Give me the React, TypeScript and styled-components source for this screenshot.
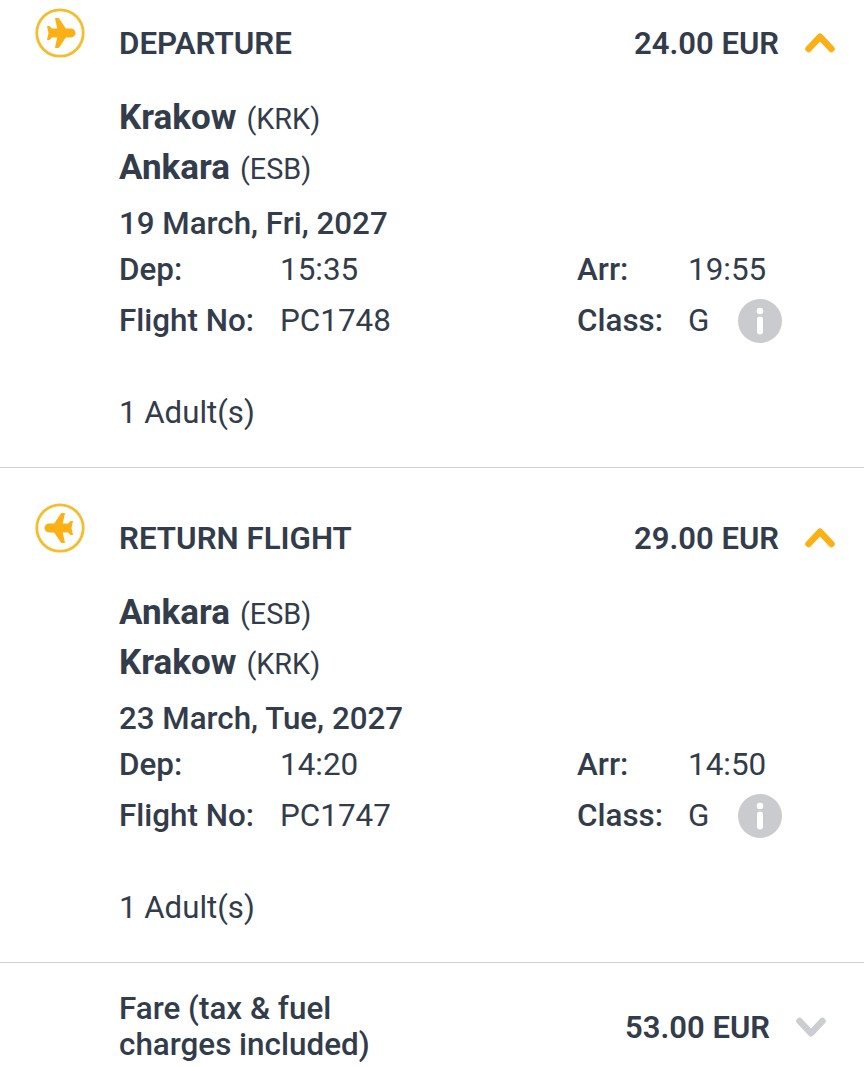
import React from "react";
import styled, { createGlobalStyle } from "styled-components";

const GlobalStyle = createGlobalStyle`
  html, body {
    margin: 0;
    padding: 0;
    background: #ffffff;
  }
  body {
    font-family: Roboto, "Liberation Sans", sans-serif;
    color: #333c4a;
  }
`;

// styles
const Page = styled.div`
  width: 864px;
  height: 1067px;
  overflow: hidden;
  background-color: #ffffff;
`;

const FlightSection = styled.section<{ $first?: boolean }>`
  display: grid;
  grid-template-columns: 119px 1fr;
  padding-top: ${(props) => (props.$first ? "0" : "27px")};
  height: 467px;
  border-bottom: 1px solid #cfd1d4;
`;

const IconColumn = styled.div`
  padding: 7.5px 0 0 34.5px;
`;

const FlightBody = styled.div`
  display: flex;
  flex-direction: column;
`;

const HeaderRow = styled.div`
  display: flex;
  align-items: center;
  justify-content: space-between;
  height: 36px;
  margin-top: 25px;
  padding-right: 29px;
`;

const Title = styled.span`
  font-size: 31.3px;
  font-weight: 600;
`;

const PriceGroup = styled.div`
  display: flex;
  align-items: center;
  gap: 26px;
`;

const Price = styled.span`
  font-size: 31px;
  font-weight: 600;
`;

const Cities = styled.div`
  margin-top: 32px;
`;

const CityRow = styled.div`
  height: 50px;
  line-height: 50px;
`;

const CityName = styled.span`
  font-size: 35px;
  font-weight: 700;
`;

const CityCode = styled.span`
  font-size: 28.8px;
  margin-left: 10px;
`;

const DateLine = styled.div`
  font-size: 31.3px;
  font-weight: 500;
  height: 36px;
  line-height: 36px;
  margin-top: 13px;
`;

const InfoGrid = styled.div`
  display: grid;
  grid-template-columns: 161px 297px 111px 50px 44px;
  grid-auto-rows: 51px;
  align-items: center;
  margin-top: 2px;
`;

const Label = styled.span`
  font-size: 31.4px;
  font-weight: 500;
`;

const Value = styled.span`
  font-size: 31.4px;
`;

const Passengers = styled.div`
  font-size: 31.2px;
  margin-top: 48px;
`;

const FareRow = styled.div`
  display: grid;
  grid-template-columns: 119px 1fr auto;
  align-items: center;
  padding: 28px 38px 0 0;
`;

const FareLabel = styled.div`
  grid-column: 2;
  font-size: 31.4px;
  font-weight: 500;
  line-height: 36px;
`;

// icons
const PlaneIcon: React.FC<{ flip?: boolean }> = ({ flip }) => (
  <svg width="50" height="50" viewBox="0 0 50 50" fill="none">
    <circle cx="25" cy="25" r="23.2" stroke="#f5bd2e" strokeWidth="2.8" />
    <g transform={flip ? "rotate(180 25 25)" : undefined}>
      <path
        fill="#fbb016"
        d="M40.500 25c0 2.400-2.200 4.400-4.700 4.400h-5L24.500 39c-.4.6-1 .9-1.700.9H20l2.200-10.500h-5.200L14.500 32h-2.500l1.500-7-1.500-7h2.500l2.500 2.600h5.200L20 10.100h2.800c.7 0 1.300.3 1.700.9l6.300 9.600h5C38.300 20.600 40.500 22.600 40.500 25z"
      />
    </g>
  </svg>
);

const Chevron: React.FC<{ open?: boolean }> = ({ open }) => (
  <svg width="30" height="20" viewBox="0 0 30 20" fill="none">
    <path
      d={open ? "M3.500 16L15 3.800 26.500 16" : "M3.500 4L15 16.200 26.500 4"}
      stroke={open ? "#fbb016" : "#cbcdd0"}
      strokeWidth="6.500"
      strokeLinecap="round"
      strokeLinejoin="round"
    />
  </svg>
);

const InfoIcon: React.FC = () => (
  <svg width="44" height="44" viewBox="0 0 44 44">
    <circle cx="22" cy="22" r="22" fill="#c9cbce" />
    <circle cx="22" cy="12" r="3.300" fill="#ffffff" />
    <rect x="19" y="17.500" width="6" height="18" rx="3" fill="#ffffff" />
  </svg>
);

// definitions
interface Flight {
  title: string;
  price: string;
  flip?: boolean;
  from: [string, string];
  to: [string, string];
  date: string;
  dep: string;
  arr: string;
  flightNo: string;
}

const flights: Flight[] = [
  {
    title: "DEPARTURE",
    price: "24.00 EUR",
    from: ["Krakow", "(KRK)"],
    to: ["Ankara", "(ESB)"],
    date: "19 March, Fri, 2027",
    dep: "15:35",
    arr: "19:55",
    flightNo: "PC1748",
  },
  {
    title: "RETURN FLIGHT",
    price: "29.00 EUR",
    flip: true,
    from: ["Ankara", "(ESB)"],
    to: ["Krakow", "(KRK)"],
    date: "23 March, Tue, 2027",
    dep: "14:20",
    arr: "14:50",
    flightNo: "PC1747",
  },
];

// component
const App: React.FC = () => {
  return (
    <Page>
      <GlobalStyle />
      {flights.map((flight, index) => (
        <FlightSection key={flight.title} $first={index === 0}>
          <IconColumn>
            <PlaneIcon flip={flight.flip} />
          </IconColumn>
          <FlightBody>
            <HeaderRow>
              <Title>{flight.title}</Title>
              <PriceGroup>
                <Price>{flight.price}</Price>
                <Chevron open />
              </PriceGroup>
            </HeaderRow>
            <Cities>
              <CityRow>
                <CityName>{flight.from[0]}</CityName>
                <CityCode>{flight.from[1]}</CityCode>
              </CityRow>
              <CityRow>
                <CityName>{flight.to[0]}</CityName>
                <CityCode>{flight.to[1]}</CityCode>
              </CityRow>
            </Cities>
            <DateLine>{flight.date}</DateLine>
            <InfoGrid>
              <Label>Dep:</Label>
              <Value>{flight.dep}</Value>
              <Label>Arr:</Label>
              <Value>{flight.arr}</Value>
              <span />
              <Label>Flight No:</Label>
              <Value>{flight.flightNo}</Value>
              <Label>Class:</Label>
              <Value>G</Value>
              <InfoIcon />
            </InfoGrid>
            <Passengers>1 Adult(s)</Passengers>
          </FlightBody>
        </FlightSection>
      ))}
      <FareRow>
        <FareLabel>
          Fare (tax &amp; fuel
          <br />
          charges included)
        </FareLabel>
        <PriceGroup>
          <Price>53.00 EUR</Price>
          <Chevron />
        </PriceGroup>
      </FareRow>
    </Page>
  );
};

export default App;
